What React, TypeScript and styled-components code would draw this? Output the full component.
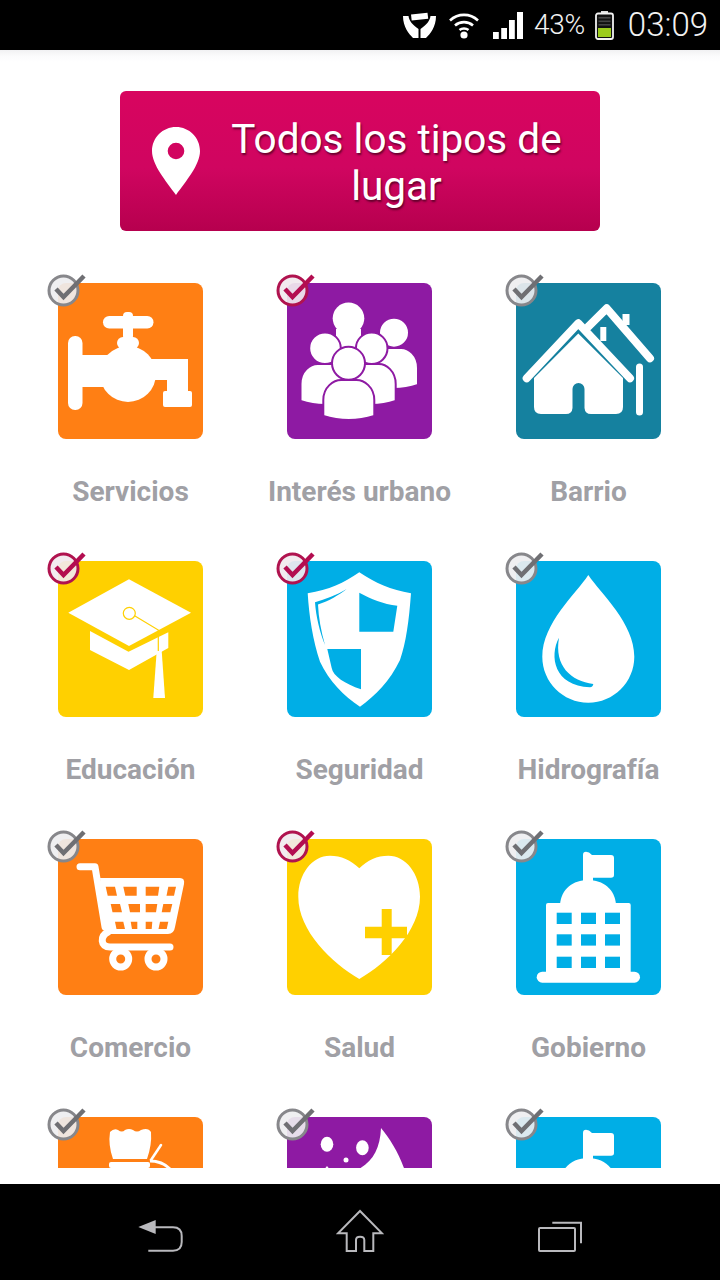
import React from "react";
import styled, { createGlobalStyle } from "styled-components";

const Global = createGlobalStyle`
  html, body { margin: 0; padding: 0; background: #fff; }
  * { box-sizing: border-box; }
`;

const Screen = styled.div`
  width: 720px;
  height: 1280px;
  display: flex;
  flex-direction: column;
  overflow: hidden;
  background: #fff;
  font-family: Roboto, "Liberation Sans", sans-serif;
`;

const StatusBar = styled.header`
  flex: 0 0 50px;
  height: 50px;
  background: #000;
  color: #f2f2f2;
  display: flex;
  align-items: center;
  justify-content: flex-end;
  padding: 0 12px 0 0;
`;

const StatusIcon = styled.svg<{ $gap: number }>`
  display: block;
  margin-right: ${(p) => p.$gap}px;
  flex: none;
`;

const Percent = styled.span`
  font-size: 28px;
  font-weight: 300;
  line-height: 50px;
  margin-right: 10px;
  letter-spacing: -0.3px;
`;

const Clock = styled.span`
  font-size: 33px;
  font-weight: 300;
  line-height: 50px;
  margin-left: 14px;
`;

const Main = styled.main`
  flex: 1 1 auto;
  min-height: 0;
  display: flex;
  flex-direction: column;
  padding: 41px 0 16px;
  background: linear-gradient(#f1f1f3 0, #fbfbfc 6px, #fff 12px);
`;

const PlaceButton = styled.button`
  flex: none;
  width: 480px;
  height: 140px;
  margin: 0 auto;
  padding: 0 7px 0 32px;
  border: 0;
  border-radius: 6px;
  display: flex;
  align-items: center;
  background: linear-gradient(#d8055f 0%, #d00560 55%, #b6004e 100%);
  color: #fff;
  font-family: inherit;
`;

const PlaceLabel = styled.span`
  flex: 1;
  padding-top: 4px;
  font-size: 40.5px;
  font-weight: 400;
  line-height: 47px;
  text-align: center;
  text-shadow: 1px 2px 2px rgba(70, 0, 30, 0.75);
`;

const List = styled.section`
  flex: 1 1 auto;
  min-height: 0;
  margin-top: 36px;
  padding: 16px 0 0 16px;
  overflow: hidden;
  display: grid;
  grid-template-columns: repeat(3, 229px);
  grid-auto-rows: 224px;
  row-gap: 54px;
  align-content: start;
`;

const Cell = styled.div`
  display: flex;
  flex-direction: column;
  align-items: center;
`;

const Tile = styled.div<{ $bg: string }>`
  position: relative;
  width: 145px;
  height: 156px;
  flex: none;
  border-radius: 8px;
  background: ${(p) => p.$bg};
  color: ${(p) => p.$bg};
`;

const TileArt = styled.svg`
  display: block;
  width: 145px;
  height: 156px;
`;

const Badge = styled.svg`
  position: absolute;
  left: -12px;
  top: -10px;
  width: 40px;
  height: 36px;
`;

const Label = styled.div`
  margin-top: 37px;
  font-size: 28px;
  font-weight: 700;
  line-height: 32px;
  color: #a0a0a5;
  white-space: nowrap;
`;

const NavBar = styled.nav`
  flex: 0 0 96px;
  background: #000;
  padding: 0 60px;
  display: grid;
  grid-template-columns: repeat(3, 200px);
  align-items: center;
  justify-items: center;
`;

const NavIcon = styled.svg`
  display: block;
  width: 48px;
  height: 48px;
  fill: none;
  stroke: #b9b9bd;
  stroke-width: 2;
`;

const Faucet = () => (
  <TileArt viewBox="0 0 145 156" fill="#fff">
    <rect x="45" y="33" width="50.5" height="12.5" rx="6.2" />
    <rect x="65" y="29" width="10" height="28" rx="4" />
    <rect x="59" y="54" width="22" height="12" rx="6" />
    <circle cx="70" cy="91" r="28" />
    <rect x="10" y="53" width="14.5" height="74" rx="7" />
    <rect x="22" y="72" width="32" height="32" />
    <path d="M85 76H130V109H109V97H85Z" />
    <rect x="105" y="108" width="29" height="16" rx="2" />
  </TileArt>
);

const personBody = (c: number, w: number, t: number, b: number) =>
  `M${c - w} ${b - 4}V${t + 20}C${c - w} ${t + 7} ${c - w * 0.6} ${t} ${c - w * 0.3} ${t}H${c + w * 0.3}C${c + w * 0.6} ${t} ${c + w} ${t + 7} ${c + w} ${t + 20}V${b - 4}Q${c} ${b + 4} ${c - w} ${b - 4}Z`;

const People = () => (
  <TileArt viewBox="0 0 145 156" fill="#fff" stroke="currentColor" strokeWidth="2">
    <rect x="49" y="46" width="25" height="32" stroke="none" />
    <circle cx="61.5" cy="35.3" r="15.8" stroke="none" />
    <path d={personBody(107, 24, 65, 106)} />
    <circle cx="107" cy="49.7" r="15" />
    <path d={personBody(38, 24.5, 81, 122)} />
    <path d={personBody(84.7, 24, 81, 122)} />
    <circle cx="38" cy="65.3" r="15.8" />
    <circle cx="84.7" cy="65.3" r="15.8" />
    <path d={personBody(61.8, 25.5, 97, 137)} />
    <circle cx="61.5" cy="80.3" r="16.5" />
  </TileArt>
);

const Houses = () => (
  <TileArt viewBox="0 0 145 156" fill="none">
    <g stroke="#fff" strokeLinecap="round" strokeLinejoin="round">
      <path d="M10.7 95.3L62.3 40.3L114 95.3" strokeWidth="8" />
      <path d="M72.3 43.7L90.7 25.3L134 75.3" strokeWidth="8" />
      <path d="M110 31V42" strokeWidth="7" strokeLinecap="butt" />
      <path d="M87.3 44V58" strokeWidth="6" strokeLinecap="butt" />
      <path d="M123.5 84V129" strokeWidth="7" />
    </g>
    <path
      fill="#fff"
      d="M62.3 50.5L18 95V124Q18 131 25 131H50Q56 131 56.5 125V106A6 6 0 0 1 68.5 106V125Q69 131 75 131H100Q107 131 107 124V95Z"
    />
  </TileArt>
);

const Cap = () => (
  <TileArt viewBox="0 0 145 156" fill="#fff">
    <path d="M10.3 51.7L71 18.3L133 51.7L71 85Z" />
    <path d="M32 70L70.5 90.7L110.3 71.3V87L71 109L32 89Z" />
    <circle cx="71.3" cy="52.3" r="6" fill="#fff" stroke="currentColor" strokeWidth="1.2" />
    <path d="M77 55L100.3 69V104" fill="none" stroke="currentColor" strokeWidth="1.2" />
    <path d="M95.3 137H107L103.7 90H98.7Z" />
  </TileArt>
);

const Shield = () => (
  <TileArt viewBox="0 0 145 156" fill="#fff">
    <path d="M72.3 11.3C88 22 104 29 124 32.3C122 60 119 82 113 99C103 120 88 135 73 145.7C57 135 42 120 33 100.7C26 80 22 55 20.7 32.3C42 29 57 22 72.3 11.3Z" />
    <g fill="currentColor">
      <path d="M72.3 31.7C84 38 96 43 110.3 44.7L106.3 70.7H72.3Z" />
      <path d="M40.3 88H74V128.3C58 123 46 115 44.7 107Z" />
      <path d="M59.7 28C50 34 38 38 28 41.3C29 56 33 72 38 84C34 70 31.5 56 31 43.5C42 40 52 34 59.7 28Z" />
    </g>
  </TileArt>
);

const Drop = () => (
  <TileArt viewBox="0 0 145 156" fill="#fff">
    <path d="M72.3 14C60 33 26.3 62 26.3 95.7C26.3 121 47 141.7 72.3 141.7C97.7 141.7 118.3 121 118.3 95.7C118.3 62 85 33 72.3 14Z" />
    <path
      fill="currentColor"
      d="M43 76.7C33 95 38 125 74 126.3Q77 126 77.3 123C55 120 38 105 43 76.7Z"
    />
  </TileArt>
);

const Cart = () => (
  <TileArt viewBox="0 0 145 156" fill="none">
    <path d="M22 27.7H37L47 88" stroke="#fff" strokeWidth="7" strokeLinecap="round" strokeLinejoin="round" />
    <path fill="#fff" d="M42 39H122Q127 39 126 45L117 88Q116 95 110 95H48Z" />
    <g fill="currentColor">
      <path d="M47.7 47.7H57L59 56.7H49.7Z" />
      <path d="M65.3 47.7H78.7V56.7H67.3Z" />
      <path d="M87.7 47.7H101.3L100 56.7H87.7Z" />
      <path d="M110.3 47.7H118L116 56.7H108.5Z" />
      <path d="M52.7 65H62L64 73.3H54.5Z" />
      <path d="M70.3 65H82V73.3H72Z" />
      <path d="M87.7 65H99.3L98 73.3H87.7Z" />
      <path d="M105.3 65H114.3L112.3 73.3H103.7Z" />
      <path d="M57 82.7H65.3L67 90H58.5Z" />
      <path d="M72.7 82.7H79.3V90H74Z" />
      <path d="M87.7 82.7H94.3L93.7 90H87.7Z" />
      <path d="M102 82.7H110.3L108.7 90H100.5Z" />
    </g>
    <path d="M50 93C42 97 42 108 52 108H112" stroke="#fff" strokeWidth="7" strokeLinecap="round" />
    <circle cx="62.7" cy="120" r="8" fill="currentColor" stroke="#fff" strokeWidth="7" />
    <circle cx="98" cy="120" r="8" fill="currentColor" stroke="#fff" strokeWidth="7" />
  </TileArt>
);

const Heart = () => (
  <TileArt viewBox="0 0 145 156" fill="#fff">
    <path d="M72.3 29.3C64 21 54 16.7 43 16.7C25 16.7 11.3 35 11.3 57.7C11.3 92 45 124 72.3 140C100 124 133 92 133 57.7C133 35 119 16.7 101.3 16.7C90 16.7 80.5 21 72.3 29.3Z" />
    <g fill="currentColor">
      <path d="M94.7 70H104.7V116H94.7Z" />
      <path d="M78 87.7H120V99.3H78Z" />
    </g>
  </TileArt>
);

const Building = () => (
  <TileArt viewBox="0 0 145 156" fill="#fff">
    <path d="M67 16Q67 12.7 70 12.7Q73 12.7 76 16H95Q98 16 98 19V36Q98 38.7 95 38.7H77V44H67Z" />
    <path d="M44 66C45 50 57 41 72 41C87 41 99 50 100 66Z" />
    <rect x="30" y="64" width="84.7" height="72" rx="2" />
    <rect x="20.7" y="132.7" width="103.3" height="11" rx="5.5" />
    <g fill="currentColor">
      {[73.7, 95.3, 117.7].map((y) =>
        [40.7, 65, 89].map((x) => <rect key={`${x}-${y}`} x={x} y={y} width="15" height="11.3" />)
      )}
    </g>
  </TileArt>
);

const Dining = () => (
  <TileArt viewBox="0 0 145 156" fill="#fff">
    <path d="M52 15Q56 11 60 13Q64 16 67 13Q71 11 75 13Q79 16 83 13Q90 10 93 15Q94 28 89 42H55Q50 28 52 15Z" />
    <rect x="51" y="45" width="41" height="6" rx="2" />
    <path d="M103 28L93 43" fill="none" stroke="#fff" strokeWidth="2.5" strokeLinecap="round" />
    <path d="M92 44Q104 44 112 52" fill="none" stroke="#fff" strokeWidth="3" />
  </TileArt>
);

const Face = () => (
  <TileArt viewBox="0 0 145 156" fill="#fff">
    <ellipse cx="40" cy="27.3" rx="6.3" ry="7.5" />
    <ellipse cx="75.4" cy="30.7" rx="6.3" ry="7.5" />
    <circle cx="59" cy="43" r="2.5" />
    <path d="M36 54L40 49L44 54Z" />
    <path d="M94 11C93 33 85 46 68 54H118C112 36 103 22 94 11Z" />
  </TileArt>
);

const CheckBadge = ({ on }: { on: boolean }) => {
  const ring = on ? "#b0134f" : "#87878b";
  const tick = on ? "#b30d50" : "#6f6f73";
  return (
    <Badge viewBox="0 0 40 36">
      <circle cx="17.5" cy="17.5" r="14.5" fill={on ? "#f1e9ee" : "#eeeef0"} fillOpacity="0.92" stroke={ring} strokeWidth="3" />
      <path d="M10 16L17.5 24L38 3" fill="none" stroke={tick} strokeWidth="4.5" />
    </Badge>
  );
};

const ORANGE = "#ff7f14";
const PURPLE = "#8e1aa3";
const TEAL = "#15819f";
const YELLOW = "#ffd000";
const BLUE = "#00aee6";

const places = [
  { name: "Servicios", bg: ORANGE, on: false, Art: Faucet },
  { name: "Interés urbano", bg: PURPLE, on: true, Art: People },
  { name: "Barrio", bg: TEAL, on: false, Art: Houses },
  { name: "Educación", bg: YELLOW, on: true, Art: Cap },
  { name: "Seguridad", bg: BLUE, on: true, Art: Shield },
  { name: "Hidrografía", bg: BLUE, on: false, Art: Drop },
  { name: "Comercio", bg: ORANGE, on: false, Art: Cart },
  { name: "Salud", bg: YELLOW, on: true, Art: Heart },
  { name: "Gobierno", bg: BLUE, on: false, Art: Building },
  { name: "", bg: ORANGE, on: false, Art: Dining },
  { name: "", bg: PURPLE, on: false, Art: Face },
  { name: "", bg: BLUE, on: false, Art: Building },
];

export default function App() {
  return (
    <Screen>
      <Global />
      <StatusBar>
        <StatusIcon $gap={13} width="33" height="26" viewBox="0 0 33 26" fill="#fff">
          <path d="M8 2.4L24.5 .8L25.2 6.8L8.7 8.4Z" />
          <path d="M0 4H5.5C6 9 10 13 15.5 17V26H10C6 22 0 15 0 4Z" />
          <path d="M33 4H27.5C27 9 23 13 17.5 17V26H23C27 22 33 15 33 4Z" />
        </StatusIcon>
        <StatusIcon $gap={14} width="30" height="27" viewBox="0 0 30 27" fill="none" stroke="#fff" strokeWidth="2.6">
          <path d="M1 8.5C9 1 21 1 29 8.5" />
          <path d="M6 13.5C11 9 19 9 24 13.5" />
          <path d="M10.5 18C13 16 17 16 19.5 18" />
          <circle cx="15" cy="23" r="3.6" fill="#fff" stroke="none" />
        </StatusIcon>
        <StatusIcon $gap={11} width="30" height="27" viewBox="0 0 30 27" fill="#fff">
          <rect x="0" y="20" width="5.8" height="7" />
          <rect x="8.2" y="16" width="5.8" height="11" />
          <rect x="16" y="8" width="5.8" height="19" />
          <rect x="24" y="0" width="6" height="27" />
        </StatusIcon>
        <Percent>43%</Percent>
        <svg width="19" height="29" viewBox="0 0 19 29">
          <rect x="6" y="0" width="7" height="3" fill="#ddd" />
          <rect x="1" y="2.5" width="17" height="25.5" rx="2" fill="#111" stroke="#f2f2f2" strokeWidth="1.8" />
          <g fill="#444">
            <rect x="3.5" y="6" width="12" height="1.6" />
            <rect x="3.5" y="9.5" width="12" height="1.6" />
            <rect x="3.5" y="13" width="12" height="1.6" />
          </g>
          <rect x="3" y="17" width="13" height="9" fill="#9ccc1c" />
        </svg>
        <Clock>03:09</Clock>
      </StatusBar>
      <Main>
        <PlaceButton>
          <svg width="48" height="68" viewBox="0 0 48 68">
            <path
              fill="#fff"
              fillRule="evenodd"
              d="M24 0C10.7 0 0 10.7 0 24C0 38 14 54 24 68C34 54 48 38 48 24C48 10.7 37.3 0 24 0ZM24 15.7A8.3 8.3 0 1 1 24 32.3A8.3 8.3 0 1 1 24 15.7Z"
            />
          </svg>
          <PlaceLabel>Todos los tipos de lugar</PlaceLabel>
        </PlaceButton>
        <List>
          {places.map(({ name, bg, on, Art }, i) => (
            <Cell key={i}>
              <Tile $bg={bg}>
                <Art />
                <CheckBadge on={on} />
              </Tile>
              {name && <Label>{name}</Label>}
            </Cell>
          ))}
        </List>
      </Main>
      <NavBar>
        <NavIcon viewBox="0 0 48 48">
          <path d="M19.7 12V26L2.3 19Z" fill="#b9b9bd" stroke="none" />
          <path d="M19 19.3H37Q45.7 19.3 45.7 28V34Q45.7 42.7 37 42.7H12.3" />
        </NavIcon>
        <NavIcon viewBox="0 0 48 48">
          <path d="M24 3L2 25.3H10.7V43H20V32Q20 28.7 24 28.7Q28.3 28.7 28.3 32V43H37.3V25.3H46Z" />
        </NavIcon>
        <NavIcon viewBox="0 0 48 48">
          <rect x="3" y="20" width="36" height="23" rx="1" />
          <path d="M16.3 14.7H45V35.3" />
        </NavIcon>
      </NavBar>
    </Screen>
  );
}
